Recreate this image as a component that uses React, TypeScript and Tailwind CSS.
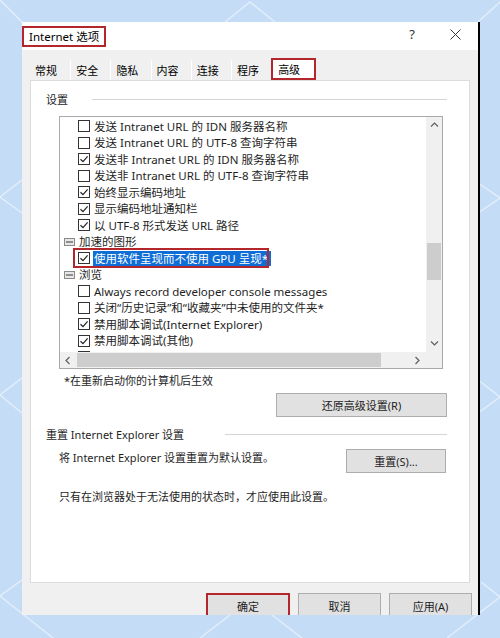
import React from "react";

type Row = { t: string; c?: boolean; group?: boolean; sel?: boolean };

const rows: Row[] = [
  { t: "发送 Intranet URL 的 IDN 服务器名称" },
  { t: "发送 Intranet URL 的 UTF-8 查询字符串" },
  { t: "发送非 Intranet URL 的 IDN 服务器名称", c: true },
  { t: "发送非 Intranet URL 的 UTF-8 查询字符串" },
  { t: "始终显示编码地址", c: true },
  { t: "显示编码地址通知栏", c: true },
  { t: "以 UTF-8 形式发送 URL 路径", c: true },
  { t: "加速的图形", group: true },
  { t: "使用软件呈现而不使用 GPU 呈现*", c: true, sel: true },
  { t: "浏览", group: true },
  { t: "Always record developer console messages" },
  { t: "关闭“历史记录”和“收藏夹”中未使用的文件夹*" },
  { t: "禁用脚本调试(Internet Explorer)", c: true },
  { t: "禁用脚本调试(其他)", c: true },
  // partly hidden by the horizontal scrollbar
  { t: "", c: true },
];

const tabs = ["常规", "安全", "隐私", "内容", "连接", "程序"];

const Checkbox = ({ checked }: { checked?: boolean }) => (
  <span className="w-[12px] h-[12px] border border-[#333] bg-white flex items-center justify-center shrink-0">
    {checked && (
      <svg width="10" height="10" viewBox="0 0 10 10">
        <path d="M1.5 5.2 L4 7.6 L8.6 2.4" fill="none" stroke="#222" strokeWidth="1.2" />
      </svg>
    )}
  </span>
);

const GroupIcon = () => (
  <svg width="11" height="10" viewBox="0 0 11 10" className="shrink-0">
    <rect x="0.5" y="1.5" width="10" height="7" fill="#e6e6e6" stroke="#8a8a8a" />
    <path d="M2 5 H9" stroke="#555" strokeWidth="1.2" />
  </svg>
);

const Chevron = ({ dir }: { dir: "up" | "down" | "left" | "right" }) => {
  const d = {
    up: "M1 5.5 L4.5 2 L8 5.5",
    down: "M1 2.5 L4.5 6 L8 2.5",
    left: "M5.5 1 L2 4.5 L5.5 8",
    right: "M2.5 1 L6 4.5 L2.5 8",
  }[dir];
  return (
    <svg width="9" height="9" viewBox="0 0 9 9">
      <path d={d} fill="none" stroke="#606060" strokeWidth="1.2" />
    </svg>
  );
};

export default function App() {
  return (
    <div className="relative w-[500px] h-[638px] overflow-hidden bg-[#c4dcf6] pt-[22px] pl-[22px] font-['Noto_Sans','Noto_Sans_CJK_SC',sans-serif] text-[#1e1e1e]">
      {/* background pattern */}
      <svg className="absolute inset-0" width="500" height="638" viewBox="0 0 500 638">
        <g fill="none" stroke="#e2eefb" strokeWidth="1.5">
          <path d="M0 0 L24 24" />
          <path d="M225 22 L250 2 L275 22" />
          <path d="M500 2 L478 22" />
          <path d="M22 180 L0 197 L22 213" />
          <path d="M478 183 L500 198 L478 213" />
          <path d="M22 378 L0 395 L22 413" />
          <path d="M478 380 L500 397 L478 413" />
          <path d="M22 580 L0 596 L53 638" />
          <path d="M200 638 L230 615" />
          <path d="M272 615 L302 638" />
          <path d="M481 582 L500 597 L447 638" />
        </g>
      </svg>

      <div className="relative w-[458px] h-[593px] overflow-hidden bg-[#f0f0f0] border-r-2 border-black flex flex-col">
        {/* title bar */}
        <div className="h-[28px] bg-white flex items-start shrink-0">
          <div className="mt-[4px] h-[21px] px-[5px] border-2 border-[#b3262c] flex items-center text-[11.5px] leading-none text-black">
            Internet 选项
          </div>
          <div className="ml-auto mt-[6px] mr-[17px] flex items-center gap-[35px] text-[13px] leading-none text-[#333]">
            <span>?</span>
            <svg width="11" height="11" viewBox="0 0 11 11">
              <path d="M0.5 0.5 L10.5 10.5 M10.5 0.5 L0.5 10.5" stroke="#333" strokeWidth="1" />
            </svg>
          </div>
        </div>

        {/* tabs */}
        <div className="mt-[8px] ml-[8px] flex items-end h-[22px] shrink-0 text-[11px] leading-none text-black">
          {tabs.map((t, i) => (
            <div
              key={t}
              className={`h-[20px] w-[40.2px] pl-[5px] flex items-center ${i > 0 ? "border-l border-white" : ""}`}
            >
              {t}
            </div>
          ))}
          <div className="h-[22px] w-[45px] bg-white border-2 border-[#b3262c] pl-[5px] flex items-center">
            高级
          </div>
        </div>

        {/* panel */}
        <div className="ml-[8px] w-[440px] h-[503px] bg-white border border-[#dcdcdc] pl-[15px] pr-[22px] pt-[10px] flex flex-col shrink-0">
          <div className="h-[16px] flex items-center text-[11px] leading-none">
            <span>设置</span>
            <span className="ml-auto w-[355px] h-px bg-[#d5d5d5]" />
          </div>

          {/* list box */}
          <div className="mt-[9px] ml-[13px] w-[384px] h-[253px] border border-[#a9a9a9] flex flex-col">
            <div className="flex h-[235px]">
              <div className="flex-1 overflow-hidden pt-[1px] text-[11.5px] leading-none">
                {rows.map((r, i) => (
                  <div key={i} className="relative h-[16.5px] flex items-center whitespace-nowrap">
                    {r.group ? (
                      <div className="pl-[4px] flex items-center gap-[4px]">
                        <GroupIcon />
                        <span>{r.t}</span>
                      </div>
                    ) : (
                      <div className="pl-[18px] flex items-center gap-[3px]">
                        <Checkbox checked={r.c} />
                        {r.t && (
                          <span
                            className={`h-[15px] px-[1px] flex items-center ${
                              r.sel ? "bg-[#0f6ed6] text-white pr-[3px]" : ""
                            }`}
                          >
                            {r.t}
                          </span>
                        )}
                      </div>
                    )}
                    {r.sel && (
                      <span className="absolute left-[13px] top-[-2px] w-[196px] h-[20px] border-2 border-[#b3262c]" />
                    )}
                  </div>
                ))}
              </div>
              <div className="w-[16px] bg-[#f0f0f0] flex flex-col">
                <div className="h-[17px] flex items-center justify-center">
                  <Chevron dir="up" />
                </div>
                <div className="h-[109px]" />
                <div className="h-[37px] mx-[1px] bg-[#cdcdcd]" />
                <div className="flex-1" />
                <div className="h-[17px] flex items-center justify-center">
                  <Chevron dir="down" />
                </div>
              </div>
            </div>
            <div className="flex h-[16px] bg-[#f0f0f0]">
              <div className="w-[17px] flex items-center justify-center">
                <Chevron dir="left" />
              </div>
              <div className="w-[304px] my-[1px] bg-[#cdcdcd]" />
              <div className="flex-1" />
              <div className="w-[17px] flex items-center justify-center">
                <Chevron dir="right" />
              </div>
              <div className="w-[16px] bg-[#f0f0f0]" />
            </div>
          </div>

          <div className="mt-[3px] ml-[18px] h-[16px] flex items-center text-[11px] leading-none">
            *在重新启动你的计算机后生效
          </div>

          <div className="mt-[5px] flex justify-end">
            <button className="w-[171px] h-[24px] bg-[#e1e1e1] border border-[#adadad] text-[11px] leading-none">
              还原高级设置(R)
            </button>
          </div>

          <div className="mt-[9px] h-[16px] flex items-center text-[11px] leading-none">
            <span>重置 Internet Explorer 设置</span>
            <span className="ml-auto w-[222px] h-px bg-[#d5d5d5]" />
          </div>

          <div className="mt-[7px] ml-[13px] flex items-start justify-between">
            <span className="h-[16px] flex items-center text-[11px] leading-none">
              将 Internet Explorer 设置重置为默认设置。
            </span>
            <button className="mr-[1px] w-[100px] h-[24px] bg-[#e1e1e1] border border-[#adadad] text-[11px] leading-none">
              重置(S)...
            </button>
          </div>

          <div className="mt-[15px] ml-[13px] h-[16px] flex items-center text-[11px] leading-none">
            只有在浏览器处于无法使用的状态时，才应使用此设置。
          </div>
        </div>

        {/* dialog buttons */}
        <div className="mt-[10px] ml-[184px] flex gap-[8px] text-[11px] leading-none shrink-0">
          <button className="w-[84px] h-[26px] bg-[#e1e1e1] border-2 border-[#b3262c]">确定</button>
          <button className="w-[83px] h-[26px] bg-[#e1e1e1] border border-[#adadad]">取消</button>
          <button className="w-[83px] h-[26px] bg-[#e1e1e1] border border-[#adadad]">应用(A)</button>
        </div>
      </div>
    </div>
  );
}
